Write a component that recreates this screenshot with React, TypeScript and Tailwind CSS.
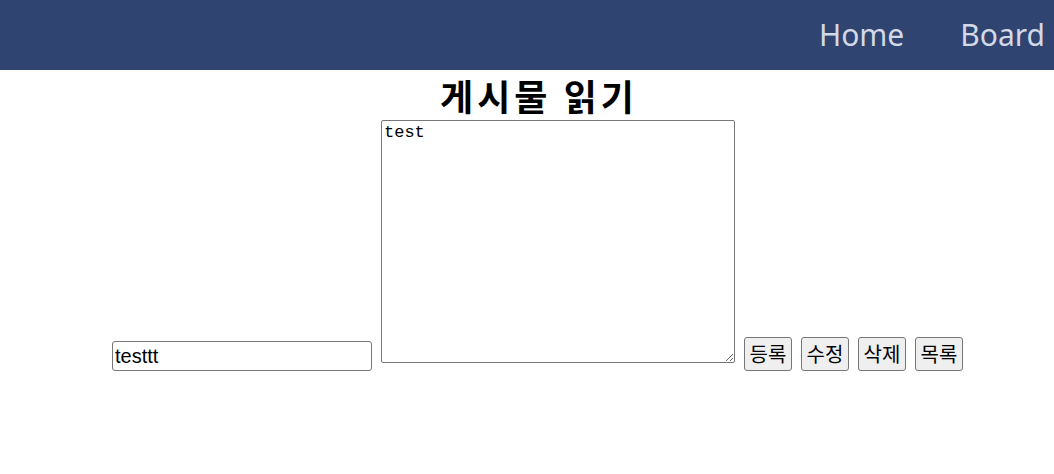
const labels = ['등록', '수정', '삭제', '목록'];

export default function App() {
  return (
    <div className="min-h-[474px] bg-white">
      <header className="flex h-[70px] items-center justify-end gap-[56px] bg-[#2f4470] pr-[9px] font-['Noto_Sans',sans-serif] text-[30px] leading-none text-[#d3d9e6]">
        <a>Home</a>
        <a>Board</a>
      </header>
      <h1 className="h-[50px] pl-[24px] text-center font-['Noto_Sans_CJK_KR',sans-serif] text-[36px] font-bold leading-[50px] tracking-[4px] text-black">
        게시물 읽기
      </h1>
      <div className="flex items-end pl-[112px]">
        <input
          defaultValue="testtt"
          className="h-[30px] w-[260px] rounded-[3px] border border-[#767676] px-[2px] font-['Liberation_Sans',sans-serif] text-[20px] text-black"
        />
        <textarea
          defaultValue="test"
          className="mb-[8px] ml-[9px] h-[243px] w-[354px] rounded-[2px] border border-[#767676] px-[2px] font-['Liberation_Mono',monospace] text-[17px] leading-[24px] text-black"
        />
        <div className="ml-[9px] flex gap-[9px] font-['Noto_Sans_CJK_KR',sans-serif]">
          {labels.map((label) => (
            <button
              key={label}
              className="h-[34px] w-[48px] rounded-[3px] border border-[#767676] bg-[#efefef] text-[20px] leading-[30px] text-black"
            >
              {label}
            </button>
          ))}
        </div>
      </div>
    </div>
  );
}
